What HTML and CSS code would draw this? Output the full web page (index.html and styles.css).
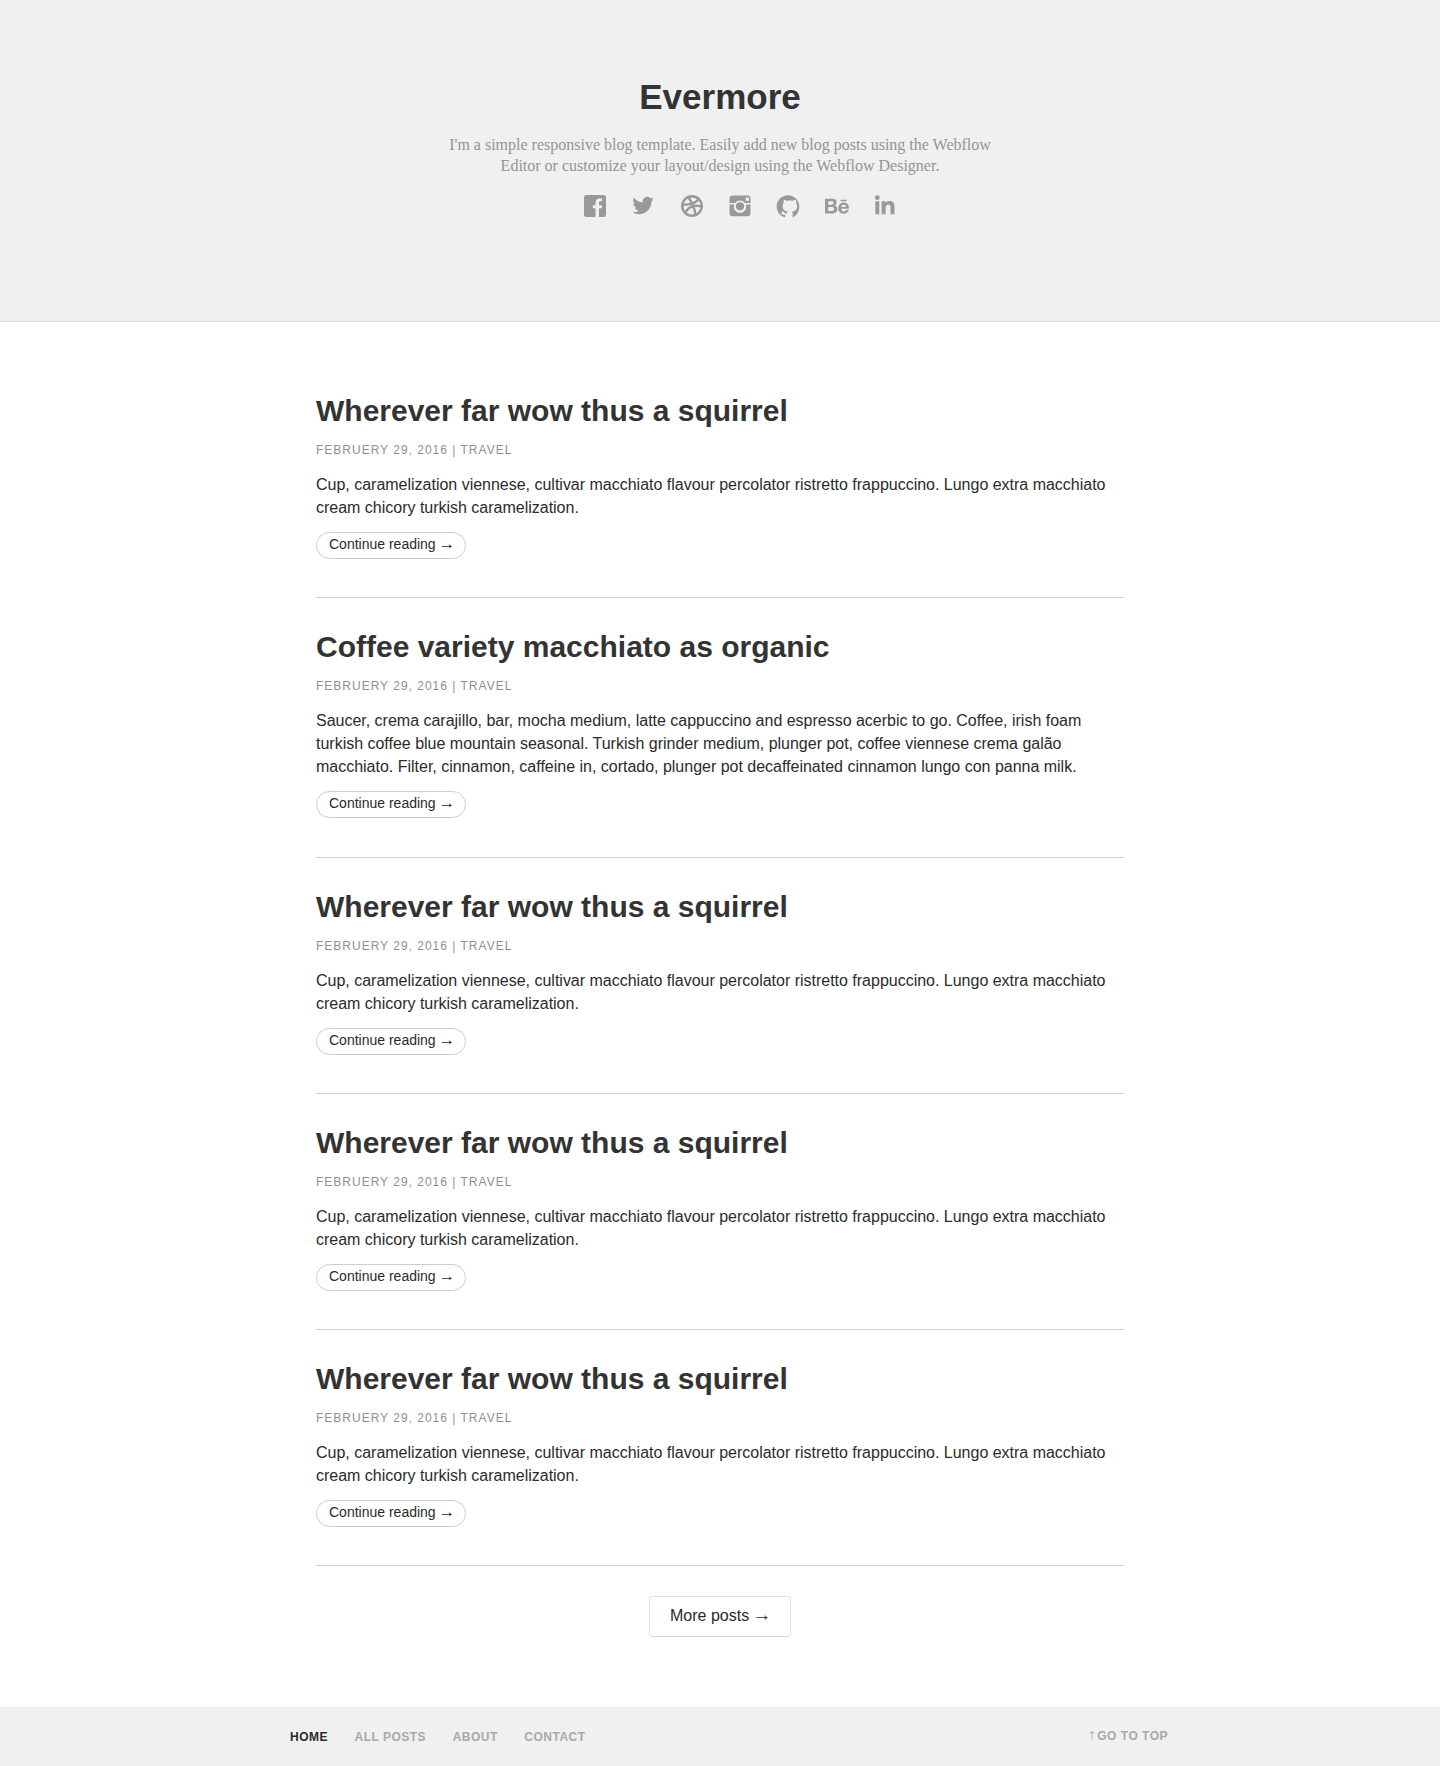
FILE: index.html
```html
<!DOCTYPE html>
<html lang="en">
<head>
<meta charset="utf-8">
<title>Evermore</title>
<link rel="stylesheet" href="styles.css">
</head>
<body>
<header class="hero">
  <h1 class="hero-title">Evermore</h1>
  <p class="hero-text">I'm a simple responsive blog template. Easily add new blog posts using the Webflow<br>Editor or customize your layout/design using the Webflow Designer.</p>
  <nav class="social" aria-label="Social">
    <svg class="icon" viewBox="0 0 24 24"><path d="M3.500 1h17A2.500 2.500 0 0 1 23 3.500v17a2.500 2.500 0 0 1-2.500 2.500H16v-8.700h2.900V11.200H16V8.900c0-1 .4-1.600 1.600-1.600H19V4.400h-2.300c-2.800 0-4.200 1.600-4.200 4.200v2.600H9.800v3.100h2.700V23h-9A2.500 2.500 0 0 1 1 20.500v-17A2.500 2.500 0 0 1 3.500 1z"/></svg>
    <svg class="icon" viewBox="-1.500 -1 27 27"><path d="M23.953 4.57a10 10 0 01-2.825.775 4.958 4.958 0 002.163-2.723c-.951.555-2.005.959-3.127 1.184a4.92 4.92 0 00-8.384 4.482C7.69 8.095 4.067 6.13 1.64 3.162a4.822 4.822 0 00-.666 2.475c0 1.71.87 3.213 2.188 4.096a4.904 4.904 0 01-2.228-.616v.06a4.923 4.923 0 003.946 4.827 4.996 4.996 0 01-2.212.085 4.936 4.936 0 004.604 3.417 9.867 9.867 0 01-6.102 2.105c-.39 0-.779-.023-1.17-.067a13.995 13.995 0 007.557 2.209c9.053 0 13.998-7.496 13.998-13.985 0-.21 0-.42-.015-.63A9.935 9.935 0 0024 4.59z"/></svg>
    <svg class="icon icon-line" viewBox="0 0 24 24"><circle cx="12" cy="12" r="9.800"/><path d="M8.300 3.200c3.500 4.500 6 10.200 7.200 17.200M2.400 10.700c6.700.2 12.500-1 16.200-5.500M5.200 18.700c3-5.500 8.600-8.300 16.300-6.300"/></svg>
    <svg class="icon" viewBox="0 0 24 24"><path fill-rule="evenodd" d="M4.500 1.500h15a3 3 0 0 1 3 3V9h-5.600a6.200 6.200 0 0 0-9.800 0H1.500V4.500a3 3 0 0 1 3-3zM17.700 3.500v3.300H21V4.300a.8.8 0 0 0-.8-.8z"/><path d="M1.500 10.500h4.700a6.200 6.200 0 1 0 11.600 0h4.700v8.800a3 3 0 0 1-3 3h-15a3 3 0 0 1-3-3z"/><circle cx="12" cy="12.300" r="4.100"/></svg>
    <svg class="icon" viewBox="-.7 -.9 25.400 25.400"><path d="M12 .297c-6.630 0-12 5.373-12 12 0 5.303 3.438 9.800 8.205 11.385.6.113.82-.258.82-.577 0-.285-.01-1.040-.015-2.040-3.338.724-4.042-1.610-4.042-1.610C6.422 18.070 5.633 17.700 5.633 17.700c-1.087-.744.084-.729.084-.729 1.205.084 1.838 1.236 1.838 1.236 1.070 1.835 2.809 1.305 3.495.998.108-.776.417-1.305.760-1.605-2.665-.3-5.466-1.332-5.466-5.930 0-1.310.465-2.380 1.235-3.220-.135-.303-.540-1.523.105-3.176 0 0 1.005-.322 3.300 1.230.960-.267 1.980-.399 3-.405 1.020.006 2.040.138 3 .405 2.280-1.552 3.285-1.230 3.285-1.230.645 1.653.240 2.873.120 3.176.765.840 1.230 1.910 1.230 3.220 0 4.610-2.805 5.625-5.475 5.920.420.360.810 1.096.810 2.220 0 1.606-.015 2.896-.015 3.286 0 .315.210.690.825.570C20.565 22.092 24 17.592 24 12.297c0-6.627-5.373-12-12-12"/></svg>
    <svg class="icon" viewBox="0 -.2 24 24"><path d="M6.938 4.503c.702 0 1.340.060 1.920.188.577.130 1.070.330 1.485.610.410.280.733.650.960 1.120.225.470.340 1.050.340 1.730 0 .740-.170 1.360-.507 1.860-.338.500-.837.900-1.502 1.220.906.260 1.576.720 2.022 1.370.448.660.665 1.450.665 2.360 0 .750-.130 1.390-.410 1.930-.280.550-.670 1-1.160 1.350-.480.348-1.050.600-1.670.767-.610.165-1.252.254-1.910.254H0V4.510h6.938v-.007zM16.940 16.665c.440.428 1.073.643 1.894.643.590 0 1.100-.148 1.530-.447.424-.290.680-.610.780-.940h2.588c-.403 1.280-1.048 2.200-1.900 2.750-.850.560-1.884.830-3.080.830-.837 0-1.584-.130-2.272-.400-.673-.270-1.240-.650-1.720-1.140-.464-.490-.823-1.080-1.077-1.770-.253-.690-.373-1.450-.373-2.270 0-.803.135-1.540.403-2.230.270-.700.644-1.280 1.120-1.790.495-.510 1.063-.895 1.736-1.194s1.400-.433 2.220-.433c.910 0 1.690.164 2.380.523.670.340 1.220.820 1.660 1.400.440.586.750 1.260.940 2.020.190.750.250 1.540.210 2.380h-7.690c0 .840.280 1.632.710 2.065l-.080.030zm-10.240.050c.317 0 .620-.030.906-.093.290-.060.548-.165.763-.300.210-.135.390-.328.520-.583.130-.240.190-.570.190-.960 0-.750-.220-1.290-.640-1.620-.430-.320-.990-.480-1.690-.480H3.240v4.050H6.700v-.030zm13.607-5.650c-.352-.385-.940-.592-1.657-.592-.468 0-.855.074-1.166.238-.302.150-.550.350-.740.590-.190.240-.317.480-.392.750-.075.260-.120.500-.135.710h4.762c-.070-.750-.330-1.300-.680-1.690v.010zM6.520 10.450c.574 0 1.050-.134 1.425-.412.374-.270.554-.720.554-1.338 0-.344-.070-.625-.180-.846-.130-.220-.300-.390-.500-.512-.210-.124-.450-.210-.720-.257-.270-.053-.560-.074-.840-.074H3.230v3.440h3.290zm9.098-4.958h5.968v1.454h-5.968V5.480v.010z"/></svg>
    <svg class="icon" viewBox="0 0 24 24"><circle cx="4.300" cy="3.600" r="2.400"/><path d="M2.300 7.300h4v13H2.300zM8.600 7.300h3.900v1.800c.7-1.300 2-2.100 4-2.100 3.800 0 5 2.300 5 5.900v7.400h-4v-6.600c0-1.900-.4-3.200-2.200-3.200-2 0-2.700 1.300-2.700 3.300v6.500h-4z"/></svg>
  </nav>
</header>
<main class="posts">
  <article class="post">
    <h2 class="post-title">Wherever far wow thus a squirrel</h2>
    <p class="post-meta">Februery 29, 2016 | Travel</p>
    <p class="post-text">Cup, caramelization viennese, cultivar macchiato flavour percolator ristretto frappuccino. Lungo extra macchiato cream chicory turkish caramelization.</p>
    <a class="post-link">Continue reading <span class="arrow">→</span></a>
  </article>
  <article class="post">
    <h2 class="post-title">Coffee variety macchiato as organic</h2>
    <p class="post-meta">Februery 29, 2016 | Travel</p>
    <p class="post-text">Saucer, crema carajillo, bar, mocha medium, latte cappuccino and espresso acerbic to go. Coffee, irish foam turkish coffee blue mountain seasonal. Turkish grinder medium, plunger pot, coffee viennese crema galão<br>macchiato. Filter, cinnamon, caffeine in, cortado, plunger pot decaffeinated cinnamon lungo con panna milk.</p>
    <a class="post-link">Continue reading <span class="arrow">→</span></a>
  </article>
  <article class="post">
    <h2 class="post-title">Wherever far wow thus a squirrel</h2>
    <p class="post-meta">Februery 29, 2016 | Travel</p>
    <p class="post-text">Cup, caramelization viennese, cultivar macchiato flavour percolator ristretto frappuccino. Lungo extra macchiato cream chicory turkish caramelization.</p>
    <a class="post-link">Continue reading <span class="arrow">→</span></a>
  </article>
  <article class="post">
    <h2 class="post-title">Wherever far wow thus a squirrel</h2>
    <p class="post-meta">Februery 29, 2016 | Travel</p>
    <p class="post-text">Cup, caramelization viennese, cultivar macchiato flavour percolator ristretto frappuccino. Lungo extra macchiato cream chicory turkish caramelization.</p>
    <a class="post-link">Continue reading <span class="arrow">→</span></a>
  </article>
  <article class="post">
    <h2 class="post-title">Wherever far wow thus a squirrel</h2>
    <p class="post-meta">Februery 29, 2016 | Travel</p>
    <p class="post-text">Cup, caramelization viennese, cultivar macchiato flavour percolator ristretto frappuccino. Lungo extra macchiato cream chicory turkish caramelization.</p>
    <a class="post-link">Continue reading <span class="arrow">→</span></a>
  </article>
  <a class="more">More posts <span class="arrow">→</span></a>
</main>
<footer class="footer">
  <nav class="footer-nav">
    <a class="footer-link current">Home</a>
    <a class="footer-link">All posts</a>
    <a class="footer-link">About</a>
    <a class="footer-link">Contact</a>
  </nav>
  <a class="footer-link to-top"><span class="up">↑</span>Go to top</a>
</footer>
</body>
</html>
```
FILE: styles.css
```css
* { box-sizing: border-box; }

body {
  margin: 0;
  min-height: 1766px;
  display: flex;
  flex-direction: column;
  background: #fff;
  color: #2b2b2b;
  font: 16px/23px "Liberation Sans", Helvetica, Arial, sans-serif;
}

h1, h2, p { margin: 0; }

.hero {
  height: 322px;
  padding-top: 75px;
  background: #f0f0f0;
  border-bottom: 1px solid #dcdcdc;
  text-align: center;
}

.hero-title {
  color: #333;
  font-size: 35px;
  line-height: 44px;
}

.hero-text {
  margin-top: 15px;
  color: #949494;
  font: 16px/21px "Liberation Serif", Georgia, serif;
}

.social {
  display: flex;
  justify-content: center;
  gap: 24.3px;
  margin-top: 17.5px;
  padding-left: 40px;
}

.icon {
  width: 24px;
  height: 24px;
  fill: #999;
}

.icon-line {
  fill: none;
  stroke: #999;
  stroke-width: 2.4;
}

.posts {
  width: 808px;
  margin: 40px auto 0;
  display: flex;
  flex-direction: column;
}

.post {
  display: flex;
  flex-direction: column;
  align-items: flex-start;
  padding: 30px 0 38.3px;
  border-bottom: 1px solid #d0d0d0;
}

.post-title {
  color: #333;
  font-size: 30px;
  line-height: 38px;
}

.post-meta {
  margin-top: 10px;
  color: #8f8f8f;
  font-size: 12px;
  line-height: 20px;
  letter-spacing: 1px;
  text-transform: uppercase;
}

.post-text {
  margin-top: 13px;
  letter-spacing: -.01px;
}

.post-link {
  width: 150px;
  height: 27px;
  margin-top: 13px;
  padding-left: 12px;
  border: 1px solid #ccc;
  border-radius: 14px;
  font-size: 14px;
  line-height: 22px;
  white-space: nowrap;
}

.arrow {
  margin-left: -1px;
  font-family: "Liberation Serif", serif;
  font-size: 1.18em;
  line-height: 1;
}

.more {
  align-self: center;
  width: 142px;
  height: 41px;
  margin-top: 30px;
  padding-left: 20px;
  border: 1px solid #e0e0e0;
  border-bottom-color: #d6d6d6;
  border-radius: 4px;
  line-height: 37px;
  white-space: nowrap;
}

.footer {
  height: 59px;
  margin-top: auto;
  padding: 0 272px 0 290px;
  display: flex;
  justify-content: space-between;
  background: #f0f0f0;
}

.footer-nav {
  display: flex;
  gap: 26.5px;
}

.footer-link {
  color: #a8a8a8;
  font-size: 12px;
  font-weight: bold;
  line-height: 61px;
  letter-spacing: .5px;
  text-transform: uppercase;
}

.current { color: #2b2b2b; }

.to-top { line-height: 59px; }

.up {
  margin-right: 1px;
  font-size: 16px;
  font-weight: normal;
  line-height: 1;
}
```
